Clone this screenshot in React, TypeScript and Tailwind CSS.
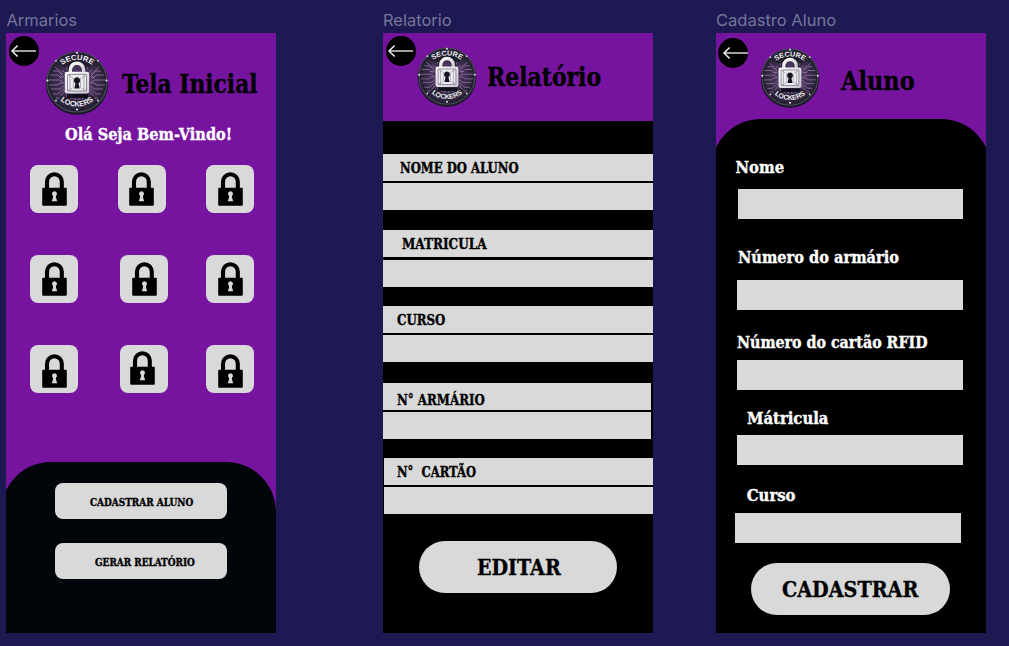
import { useLayoutEffect, useRef, type ReactNode } from "react";

const SERIF = "font-['DejaVu_Serif_Condensed','DejaVu_Serif',serif] font-bold";

/** One line of serif text condensed horizontally to a given width. */
function FitText({ width, className = "", children }: { width: number; className?: string; children: string }) {
  const ref = useRef<HTMLSpanElement>(null);
  useLayoutEffect(() => {
    const el = ref.current;
    if (!el) return;
    el.style.transform = `scaleX(${width / el.offsetWidth})`;
  }, [width, children]);
  return (
    <span className={`block shrink-0 ${SERIF} ${className}`} style={{ width }}>
      <span ref={ref} className="inline-block origin-left whitespace-pre [-webkit-text-stroke:0.35px_currentColor]">
        {children}
      </span>
    </span>
  );
}

function BackButton({ className = "", shift = "pl-[2px]" }: { className?: string; shift?: string }) {
  return (
    <button aria-label="Voltar" className={`flex size-[30px] shrink-0 items-center rounded-full bg-black ${shift} ${className}`}>
      <svg width="26" height="12" viewBox="0 0 26 12" fill="none" stroke="#fff" strokeWidth="1.4" className="shrink-0">
        <path d="M25 6H1" strokeOpacity=".9" />
        <path d="M6.6 .6L1 6l5.6 5.4" />
      </svg>
    </button>
  );
}

const TRACES = [
  "M4 29h11l3 2M4 34h8l3-2h4M6 38h9l4-3M5 24h8l4 4M8 20h5l5 5M10 16l8 7M8 43h5l6-5M11 47h3l6-7",
  "M60 29H49l-3 2M60 34h-8l-3-2h-4M58 38h-9l-4-3M59 24h-8l-4 4M56 20h-5l-5 5M54 16l-8 7M56 43h-5l-6-5M53 47h-3l-6-7",
  "M22 43v5M26 43v6M30 43v6M34 43v6M38 43v6M42 43v5M19 14l5 6M45 14l-5 6M17 19l4 4M47 19l-4 4M14 26h5M50 26h-5",
];

function Logo({ id, className }: { id: string; className: string }) {
  return (
    <svg viewBox="0 0 64 64" className={`shrink-0 ${className}`}>
      <defs>
        <path id={`${id}-top`} d="M8.5 25.5A25 25 0 0 1 55.5 25.5" />
        <path id={`${id}-bottom`} d="M6 29A26 26.5 0 0 0 58 29" />
        <radialGradient id={`${id}-disc`}>
          <stop offset="0" stopColor="#67407f" />
          <stop offset=".7" stopColor="#3b2c4c" />
          <stop offset="1" stopColor="#1f1e2d" />
        </radialGradient>
        <linearGradient id={`${id}-steel`} x1="0" y1="0" x2="1" y2="1">
          <stop offset="0" stopColor="#fff" />
          <stop offset="1" stopColor="#c9c6d0" />
        </linearGradient>
      </defs>
      <circle cx="32" cy="32.5" r="31.3" fill="#191926" />
      <circle cx="32" cy="31" r="30" fill={`url(#${id}-disc)`} stroke="#4b495a" strokeWidth="1.2" />
      {TRACES.map((d) => (
        <path key={d} d={d} fill="none" stroke="#a583b4" strokeWidth=".7" />
      ))}
      <path d="M14 13A25 25 0 0 1 50 13L44 17A18 18 0 0 0 20 17Z" fill="#211e2d" />
      <path d="M14 46A25 25 0 0 0 50 46L45 44A18 18 0 0 1 19 44Z" fill="#211e2d" />
      <path d="M22 43h21v4H22z" fill="#13101d" />
      <g fill="#e4e0e9">
        <circle cx="32" cy="1.8" r="1.1" />
        <circle cx="32" cy="58.5" r="1.1" />
        <circle cx="2.4" cy="29.5" r="1.1" />
        <circle cx="61.6" cy="29.5" r="1.1" />
        <circle cx="11" cy="9.8" r=".9" />
        <circle cx="53" cy="9.8" r=".9" />
        <circle cx="11" cy="49.5" r=".9" />
        <circle cx="53" cy="49.5" r=".9" />
      </g>
      <path d="M25.2 22v-3.6a6.8 6.8 0 0 1 13.6 0V22" fill="none" stroke="#171421" strokeWidth="5.4" />
      <path d="M25.4 22v-3.2a6.6 6.6 0 0 1 13.2 0V22" fill="none" stroke={`url(#${id}-steel)`} strokeWidth="3.6" />
      <g fill="#f1eff4" textAnchor="middle" className="font-['Liberation_Sans',sans-serif] text-[7.5px] font-bold">
        <text>
          <textPath href={`#${id}-top`} startOffset="50%" textLength="32" lengthAdjust="spacingAndGlyphs">SECURE</textPath>
        </text>
        <text>
          <textPath href={`#${id}-bottom`} startOffset="50%" textLength="36" lengthAdjust="spacingAndGlyphs">LOCKERS</textPath>
        </text>
      </g>
      <rect x="19.8" y="20.8" width="24.4" height="21.8" rx="2.4" fill={`url(#${id}-steel)`} />
      <rect x="22.5" y="23.4" width="19" height="16.6" rx="1" fill="#eeecf1" stroke="#777180" strokeWidth=".8" />
      <path d="M22.5 23.5l6 4v9l-6 3.5M41.5 23.5l-6 4v9l6 3.5M25 24v15.5M39 24v15.5" fill="none" stroke="#8b8495" strokeWidth=".6" />
      <path d="M32 26.2a3.2 3.2 0 0 1 1.5 6l1.2 5.2h-5.4l1.2-5.2a3.2 3.2 0 0 1 1.5-6z" fill="#171421" />
    </svg>
  );
}

function PadlockTile({ className = "", icon }: { className?: string; icon: string }) {
  return (
    <button aria-label="Armário" className={`flex size-12 shrink-0 items-start rounded-lg bg-[#d9d9d9] ${className}`}>
      <svg width="25" height="34" viewBox="0 0 25 34" className={icon}>
        <path d="M5 17V9.8a7.4 7.6 0 0 1 14.8 0V17" fill="none" stroke="#000" strokeWidth="4.1" />
        <rect x=".2" y="15.7" width="24.6" height="18" rx="1" fill="#000" />
        <path d="M12.5 19.2a2.5 2.5 0 0 1 1.5 4.5l-.1 1.5 1.3 4h-5.4l1.3-4-.1-1.5a2.5 2.5 0 0 1 1.5-4.5z" fill="#d9d9d9" />
      </svg>
    </button>
  );
}

function Frame({ name, className, body, children }: { name: string; className: string; body: string; children: ReactNode }) {
  return (
    <section className={`flex w-[270px] shrink-0 flex-col ${className}`}>
      <h2 className="h-[33px] pt-[8px] font-['Inter',sans-serif] text-[16.5px] leading-6 whitespace-nowrap text-[#77759a]">{name}</h2>
      <div className={`flex h-[600px] flex-col overflow-hidden ${body}`}>{children}</div>
    </section>
  );
}

function HomeScreen() {
  return (
    <Frame name="Armarios" className="ml-[6.4px]" body="bg-[#7614a0]">
      <div className="flex h-[87px] shrink-0 items-start">
        <BackButton className="mt-[3px] ml-[3px]" />
        <Logo id="home" className="mt-[18px] ml-[6px] size-[64px]" />
        <FitText width={136} className="mt-[35px] ml-[12.7px] text-[26px] leading-8">Tela Inicial</FitText>
      </div>
      <FitText width={167} className="mt-[3px] ml-[58.3px] text-[17.5px] leading-[22px] text-white">Olá Seja Bem-Vindo!</FitText>
      <div className="mt-[20px] ml-[24px] flex flex-col gap-[42px]">
        <div className="flex">
          <PadlockTile icon="ml-[11.6px] mt-[7px]" />
          <PadlockTile className="ml-[39.5px]" icon="ml-[11px] mt-[7px]" />
          <PadlockTile className="ml-[40px]" icon="ml-[11.7px] mt-[7px]" />
        </div>
        <div className="flex">
          <PadlockTile icon="ml-[11.6px] mt-[7px]" />
          <PadlockTile className="ml-[42px]" icon="ml-[11.6px] mt-[7px]" />
          <PadlockTile className="ml-[37.5px]" icon="ml-[11.7px] mt-[7px]" />
        </div>
        <div className="flex">
          <PadlockTile icon="ml-[11.6px] mt-[9px]" />
          <PadlockTile className="ml-[42px]" icon="ml-[9.5px] mt-[5.5px]" />
          <PadlockTile className="ml-[37.5px]" icon="ml-[11.7px] mt-[9px]" />
        </div>
      </div>
      <div className="mt-[69px] -ml-[5px] flex w-[275px] flex-1 flex-col gap-6 rounded-t-[50px] bg-[#02060a] pt-[21px] pl-[53.5px]">
        <button className="flex h-9 w-[172px] items-center rounded-lg bg-[#d9d9d9] pt-[4px] pl-[35.3px]">
          <FitText width={103} className="text-left text-[11px] leading-4">CADASTRAR ALUNO</FitText>
        </button>
        <button className="flex h-9 w-[172px] items-center rounded-lg bg-[#d9d9d9] pt-[4px] pl-[40.3px]">
          <FitText width={100} className="text-left text-[11px] leading-4">GERAR RELATÓRIO</FitText>
        </button>
      </div>
    </Frame>
  );
}

interface ReportRowProps {
  label: string;
  width: number;
  text: string;
  className?: string;
  bar?: string;
}

function ReportRow({ label, width, text, className = "gap-[2px]", bar = "" }: ReportRowProps) {
  return (
    <div className={`flex shrink-0 flex-col ${className}`}>
      <div className={`h-[27px] bg-[#d9d9d9] ${bar}`}>
        <FitText width={width} className={`text-[14.5px] leading-5 ${text}`}>{label}</FitText>
      </div>
      <div className={`h-[27px] bg-[#d9d9d9] ${bar}`} />
    </div>
  );
}

function ReportScreen() {
  return (
    <Frame name="Relatorio" className="ml-[106.6px]" body="bg-black">
      <div className="flex h-[88px] shrink-0 items-start bg-[#7614a0]">
        <BackButton className="mt-[3px] ml-[3px]" />
        <Logo id="report" className="mt-[14px] ml-[1px] size-[60px]" />
        <FitText width={114.5} className="mt-[28px] ml-[9.6px] text-[26px] leading-8">Relatório</FitText>
      </div>
      <ReportRow label="NOME DO ALUNO" width={119} text="pt-[4px] ml-[17px]" className="mt-[33px] gap-[2px]" />
      <ReportRow label="MATRICULA" width={85} text="pt-[4px] ml-[19px]" className="mt-[20.4px] gap-[3px]" />
      <ReportRow label="CURSO" width={48} text="pt-[4px] ml-[14px]" className="mt-[18.6px] gap-[2px]" />
      <ReportRow label="N° ARMÁRIO" width={88} text="pt-[7px] ml-[14px]" className="mt-[21px] gap-[2px]" bar="mr-[1.5px]" />
      <ReportRow label="N°  CARTÃO" width={79} text="pt-[4px] ml-[12.7px]" className="mt-[19px] gap-[2px]" bar="ml-[1.3px]" />
      <button className="mt-[27px] ml-[36px] flex h-[52px] w-[198px] items-center rounded-full bg-[#d9d9d9] pl-[58px]">
        <FitText width={84} className="text-left text-[23px] leading-8">EDITAR</FitText>
      </button>
    </Frame>
  );
}

function Field({ label, width, text, input }: { label: string; width: number; text: string; input: string }) {
  return (
    <label className="flex shrink-0 flex-col">
      <FitText width={width} className={`text-[16.5px] leading-5 text-white ${text}`}>{label}</FitText>
      <input className={`h-[30px] w-[225.5px] bg-[#d9d9d9] outline-none ${input}`} />
    </label>
  );
}

function StudentScreen() {
  return (
    <Frame name="Cadastro Aluno" className="ml-[63px]" body="bg-[#7614a0]">
      <div className="flex h-[86.3px] shrink-0 items-start">
        <BackButton className="mt-[5px] ml-[2.3px]" shift="pl-[5px]" />
        <Logo id="student" className="mt-[15px] ml-[12px] size-[60px]" />
        <FitText width={74} className="mt-[31.6px] ml-[20.5px] text-[26px] leading-8">Aluno</FitText>
      </div>
      <div className="-ml-[5px] flex w-[280px] flex-1 flex-col rounded-t-[50px] bg-black pl-[5px]">
        <Field label="Nome" width={49} text="mt-[38.7px] ml-[19.5px]" input="mt-[11px] ml-[21.7px]" />
        <Field label="Número do armário" width={161} text="mt-[29px] ml-[21.8px]" input="mt-[12px] ml-[21.3px]" />
        <Field label="Número do cartão RFID" width={191} text="mt-[23px] ml-[21.3px]" input="mt-[7px] ml-[21.3px]" />
        <Field label="Mátricula" width={81} text="mt-[19px] ml-[31px]" input="mt-[6px] ml-[21.3px]" />
        <Field label="Curso" width={49} text="mt-[21px] ml-[30.8px]" input="mt-[7px] ml-[19.3px]" />
        <button className="mt-[20px] ml-[35.3px] flex h-[52px] w-[198.5px] items-center rounded-full bg-[#d9d9d9] pl-[30.5px]">
          <FitText width={136} className="text-left text-[23px] leading-8">CADASTRAR</FitText>
        </button>
      </div>
    </Frame>
  );
}

export default function App() {
  return (
    <main className="flex h-[646px] w-[1009px] items-start overflow-hidden bg-[#1d1952] text-black">
      <HomeScreen />
      <ReportScreen />
      <StudentScreen />
    </main>
  );
}
